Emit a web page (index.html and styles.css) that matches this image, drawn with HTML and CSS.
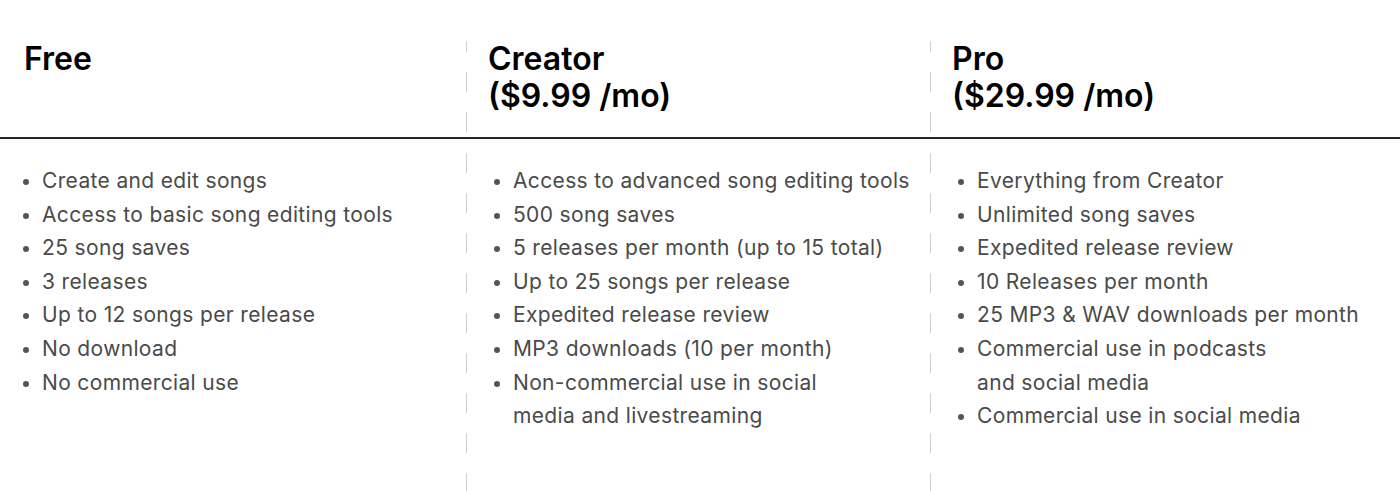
FILE: index.html
```html
<!DOCTYPE html>
<html lang="en">
<head>
<meta charset="utf-8">
<title>Plans</title>
<link rel="stylesheet" href="styles.css">
</head>
<body>
<div class="plans">
  <div class="head col1"><h2>Free</h2></div>
  <div class="head col2 divided"><h2>Creator<br>($9.99 /mo)</h2></div>
  <div class="head col3 divided"><h2>Pro<br>($29.99 /mo)</h2></div>

  <div class="body col1">
    <ul>
      <li>Create and edit songs</li>
      <li>Access to basic song editing tools</li>
      <li>25 song saves</li>
      <li>3 releases</li>
      <li>Up to 12 songs per release</li>
      <li>No download</li>
      <li>No commercial use</li>
    </ul>
  </div>
  <div class="body col2 divided">
    <ul>
      <li>Access to advanced song editing tools</li>
      <li>500 song saves</li>
      <li>5 releases per month (up to 15 total)</li>
      <li>Up to 25 songs per release</li>
      <li>Expedited release review</li>
      <li>MP3 downloads (10 per month)</li>
      <li>Non-commercial use in social<br>media and livestreaming</li>
    </ul>
  </div>
  <div class="body col3 divided">
    <ul>
      <li>Everything from Creator</li>
      <li>Unlimited song saves</li>
      <li>Expedited release review</li>
      <li>10 Releases per month</li>
      <li>25 MP3 &amp; WAV downloads per month</li>
      <li>Commercial use in podcasts<br>and social media</li>
      <li>Commercial use in social media</li>
    </ul>
  </div>
</div>
</body>
</html>
```

FILE: styles.css
```css
html, body {
  margin: 0;
  padding: 0;
  background: #ffffff;
}

body {
  font-family: "Inter", "Liberation Sans", sans-serif;
  color: #000;
  height: 491px;
  overflow: hidden;
}

.plans {
  display: grid;
  grid-template-columns: 466px 464px 1fr;
  grid-template-rows: 139px 352px;
}

.head {
  border-bottom: 2px solid #262626;
  padding: 41px 0 0 22px;
}

.head.col1 {
  padding-left: 24px;
}

.head h2 {
  margin: 0;
  font-size: 32px;
  line-height: 36.7px;
  font-weight: 600;
  color: #000;
}

.divided {
  background-image: linear-gradient(to bottom, #cfcfcf 50%, transparent 50%);
  background-size: 1px 40px;
  background-repeat: repeat-y;
}

.head.divided {
  padding-top: 0;
  border-top: 41px solid transparent;
  background-origin: border-box;
  background-clip: padding-box;
  background-position: 0 -8px;
}

.body {
  padding-top: 25px;
}

.body.divided {
  background-position: 0 14px;
}

.body ul {
  margin: 0;
  padding: 0 0 0 42px;
  list-style: none;
  font-size: 21px;
  line-height: 33.6px;
  letter-spacing: 0.35px;
  color: #4a4a4a;
}

.body.divided ul {
  padding-left: 47px;
}

.body li::before {
  content: "";
  display: inline-block;
  width: 6px;
  height: 6px;
  border-radius: 50%;
  background: #555;
  margin-left: -19px;
  margin-right: 13px;
  vertical-align: 3px;
}
```
